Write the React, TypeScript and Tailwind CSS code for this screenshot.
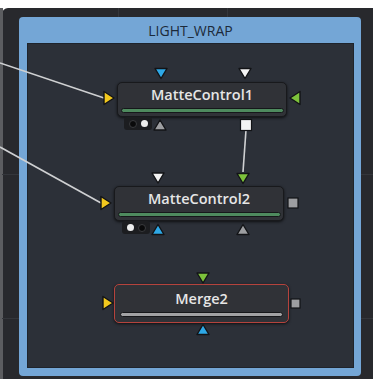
import React from "react";

const Tri = ({ x, y, dir, color, w = 12, h = 10 }: { x: number; y: number; dir: "down" | "up" | "right" | "left"; color: string; w?: number; h?: number }) => {
  let pts = "";
  if (dir === "down") pts = `${x - w / 2},${y - h / 2} ${x + w / 2},${y - h / 2} ${x},${y + h / 2}`;
  if (dir === "up") pts = `${x - w / 2},${y + h / 2} ${x + w / 2},${y + h / 2} ${x},${y - h / 2}`;
  if (dir === "right") pts = `${x - h / 2},${y - w / 2} ${x - h / 2},${y + w / 2} ${x + h / 2},${y}`;
  if (dir === "left") pts = `${x + h / 2},${y - w / 2} ${x + h / 2},${y + w / 2} ${x - h / 2},${y}`;
  return <polygon points={pts} fill={color} stroke="#121316" strokeWidth={1.4} strokeLinejoin="round" />;
};

const Node = ({ left, top, label, bar, red }: { left: number; top: number; label: string; bar: string; red?: boolean }) => (
  <div
    className={`absolute flex flex-col items-center rounded-[5px] bg-[#303237] shadow-[0_1px_3px_rgba(0,0,0,0.7)] ${red ? "border-[1.5px] border-[#b5433d]" : "border border-[#18191c]"}`}
    style={{ left, top, width: red ? 175 : 170, height: red ? 39 : 35 }}
  >
    <div
      className={`${red ? "mt-[4px]" : "mt-[2px]"} text-[14.5px] font-semibold leading-[20px] text-[#e6e6e6]`}
      style={{ fontFamily: '"Open Sans", sans-serif' }}
    >
      {label}
    </div>
    <div className={`mt-[3px] h-[5px] rounded-full border border-[#16171a] ${bar}`} style={{ width: 163 }} />
  </div>
);

const Dots = ({ left, top, first }: { left: number; top: number; first: "black" | "white" }) => {
  const black = <div className="h-[8px] w-[8px] rounded-full border border-[#3a3b3e] bg-[#0a0a0b]" />;
  const white = <div className="h-[7px] w-[7px] rounded-full bg-[#ededed]" />;
  return (
    <div className="absolute flex items-center justify-center gap-[4px] rounded-[3px] bg-[#1c1d20]" style={{ left, top, width: 28, height: 13 }}>
      {first === "black" ? black : white}
      {first === "black" ? white : black}
    </div>
  );
};

export default function App() {
  return (
    <div className="relative h-[379px] w-[373px] overflow-hidden bg-white">
      <div className="absolute left-0 top-[8px] h-[371px] w-[3px] bg-[#5c5d60]" />
      <div className="ml-[2px] mt-[8px] flex h-[371px] w-[371px] flex-col rounded-tl-[6px] bg-[#28292d] pl-[17px] pt-[9px]">
        <div className="flex h-[359px] w-[342px] flex-col rounded-[4px] bg-[#74a6d6] pb-[8px] pl-[8px] pr-[7px]">
          <div
            className="flex h-[26px] items-center justify-center text-[14px] font-medium text-[#1c2a3a]"
            style={{ fontFamily: '"Open Sans", sans-serif' }}
          >
            LIGHT_WRAP
          </div>
          <div className="flex-1 border border-[#1f242c] bg-[#2c3038]" />
        </div>
      </div>

      {/* faint grid lines of background */}
      <div className="absolute left-[118px] top-[8px] h-[9px] w-px bg-[#34363b]" />
      <div className="absolute left-[227px] top-[8px] h-[9px] w-px bg-[#34363b]" />
      <div className="absolute left-[2px] top-[174px] h-px w-[17px] bg-[#34363b]" />
      <div className="absolute left-[2px] top-[318px] h-px w-[17px] bg-[#34363b]" />
      <div className="absolute left-[361px] top-[174px] h-px w-[12px] bg-[#34363b]" />
      <div className="absolute left-[361px] top-[318px] h-px w-[12px] bg-[#34363b]" />

      {/* nodes */}
      <Node left={117} top={82} label="MatteControl1" bar="bg-[#4e8a5e]" />
      <Node left={114} top={186} label="MatteControl2" bar="bg-[#4e8a5e]" />
      <Node left={114} top={284} label="Merge2" bar="bg-[#a2a2a4]" red />

      <Dots left={124} top={117} first="black" />
      <Dots left={122} top={221} first="white" />

      {/* wires and ports */}
      <svg className="pointer-events-none absolute left-0 top-0" width={373} height={379}>
        <line x1={0} y1={63} x2={104} y2={98} stroke="#cfd0d2" strokeWidth={1.6} />
        <line x1={0} y1={147} x2={101} y2={203} stroke="#cfd0d2" strokeWidth={1.6} />
        <line x1={246} y1={130} x2={243} y2={172} stroke="#cfd0d2" strokeWidth={1.6} />

        {/* MatteControl1 */}
        <Tri x={109} y={98} dir="right" color="#f2c81e" w={13} h={10} />
        <Tri x={295} y={98} dir="left" color="#7cc13b" w={13} h={10} />
        <Tri x={161} y={73.5} dir="down" color="#2ea8e6" />
        <Tri x={245} y={73.5} dir="down" color="#f4f4f4" />
        <Tri x={160} y={125} dir="up" color="#9d9ea1" />
        <rect x={240.5} y={119.5} width={11} height={11} fill="#f4f4f4" stroke="#121316" strokeWidth={1.2} />

        {/* MatteControl2 */}
        <Tri x={106} y={203} dir="right" color="#f2c81e" w={13} h={10} />
        <Tri x={158} y={178} dir="down" color="#f4f4f4" />
        <Tri x={243} y={178.5} dir="down" color="#7cc13b" />
        <rect x={288} y={198} width={10} height={10} fill="#9d9ea1" stroke="#121316" strokeWidth={1.2} />
        <Tri x={158} y={229.5} dir="up" color="#2ea8e6" />
        <Tri x={243} y={229.5} dir="up" color="#9d9ea1" />

        {/* Merge2 */}
        <Tri x={203} y={278} dir="down" color="#7cc13b" />
        <Tri x={108} y={303} dir="right" color="#f2c81e" w={13} h={10} />
        <rect x={291} y={299} width={9} height={9} fill="#9d9ea1" stroke="#121316" strokeWidth={1.2} />
        <Tri x={203} y={329.5} dir="up" color="#2ea8e6" />
      </svg>
    </div>
  );
}
